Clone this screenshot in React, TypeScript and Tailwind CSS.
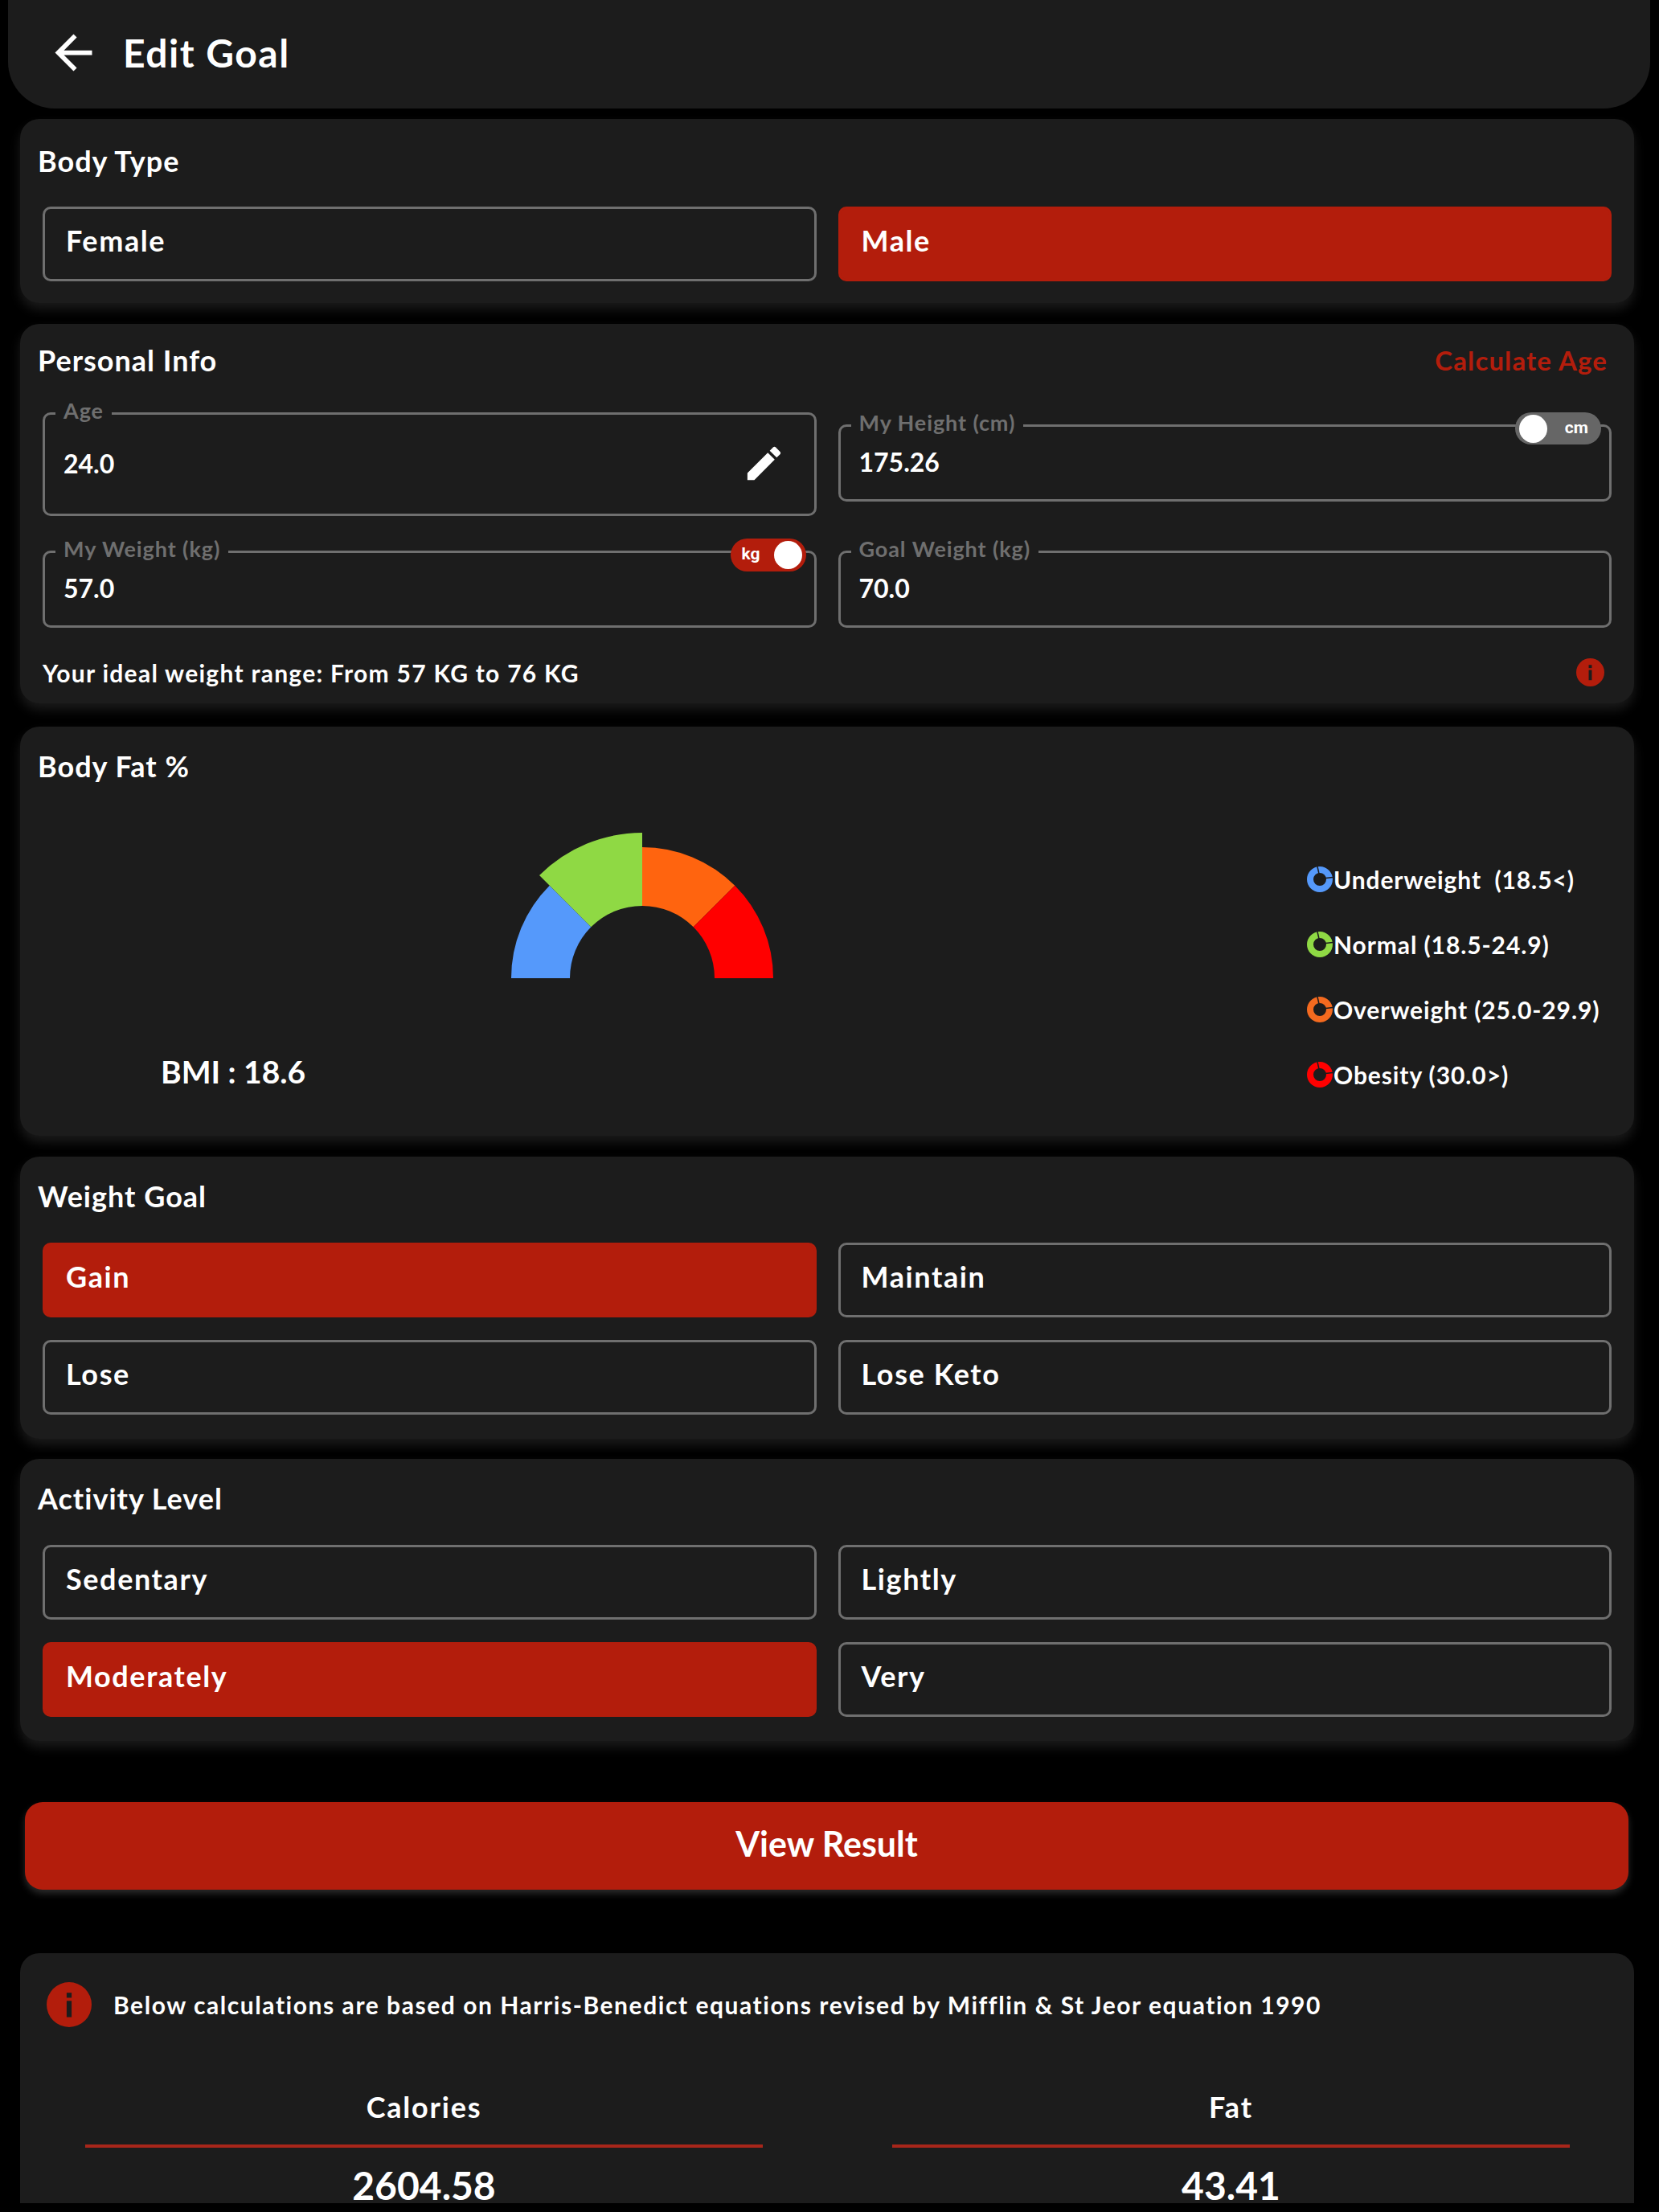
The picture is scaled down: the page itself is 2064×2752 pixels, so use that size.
const font = { fontFamily: 'Lato, "Open Sans", sans-serif' };

function Card({ className, children }: { className: string; children: React.ReactNode }) {
  return (
    <section
      className={`mr-[20px] ml-[15px] rounded-[24px] bg-[#1c1c1c] shadow-[0_8px_14px_rgba(48,48,48,0.55)] ${className}`}
    >
      {children}
    </section>
  );
}

function Heading({ children }: { children: React.ReactNode }) {
  return <h2 className="text-[36px] leading-[44px] font-bold tracking-[1px] text-white">{children}</h2>;
}

function Choice({ label, active = false }: { label: string; active?: boolean }) {
  return (
    <div
      className={`flex h-[93px] items-center rounded-[10px] border-[3px] pb-[9px] pl-[26px] text-[36px] font-bold tracking-[1.6px] text-white ${
        active ? 'border-[#b31d0c] bg-[#b31d0c]' : 'border-[#6f6f6f]'
      }`}
    >
      {label}
    </div>
  );
}

function Field({
  label,
  value,
  className,
  valueClassName,
  children,
}: {
  label: string;
  value: string;
  className: string;
  valueClassName: string;
  children?: React.ReactNode;
}) {
  return (
    <fieldset className={`relative rounded-[10px] border-[3px] border-[#6f6f6f] ${className}`}>
      <legend className="ml-[13px] px-[10px] text-[27px] leading-[28px] font-bold tracking-[0.9px] text-[#6f6f6f]">
        <span className="relative -top-[4px]">{label}</span>
      </legend>
      <div className={`pl-[23px] text-[32px] leading-[40px] font-bold text-white ${valueClassName}`}>
        {value}
      </div>
      {children}
    </fieldset>
  );
}

function InfoIcon({ className }: { className: string }) {
  return (
    <svg viewBox="0 0 36 36" className={className}>
      <circle cx="18" cy="18" r="18" fill="#b31d0c" />
      <rect x="16" y="8.5" width="4" height="4" fill="#1c1c1c" />
      <rect x="16" y="15" width="4" height="13" fill="#1c1c1c" />
    </svg>
  );
}

function Arc({ r, a0, a1, r0, fill }: { r: number; a0: number; a1: number; r0: number; fill: string }) {
  // angles in degrees, measured clockwise from the left end of the half circle
  const cx = 181;
  const cy = 181;
  const pt = (rad: number, a: number) => {
    const t = (a * Math.PI) / 180;
    return `${(cx - rad * Math.cos(t)).toFixed(2)} ${(cy - rad * Math.sin(t)).toFixed(2)}`;
  };
  return (
    <path
      d={`M${pt(r, a0)} A${r} ${r} 0 0 1 ${pt(r, a1)} L${pt(r0, a1)} A${r0} ${r0} 0 0 0 ${pt(r0, a0)} Z`}
      fill={fill}
    />
  );
}

function Gauge() {
  return (
    <svg viewBox="0 0 362 181" className="h-[181px] w-[362px]">
      <Arc r={163} r0={90} a0={0} a1={45} fill="#5599fb" />
      <Arc r={181} r0={90} a0={45} a1={90} fill="#8fd944" />
      <Arc r={163} r0={90} a0={90} a1={135} fill="#ff640f" />
      <Arc r={163} r0={90} a0={135} a1={180} fill="#ff0000" />
    </svg>
  );
}

function Donut({ color }: { color: string }) {
  return (
    <svg viewBox="0 0 32 32" className="h-[32px] w-[32px] shrink-0">
      <circle cx="16" cy="16" r="12" fill="none" stroke={color} strokeWidth="8" />
      <path d="M19 15 L32 13.5" stroke="#1c1c1c" strokeWidth="1.5" />
      <path d="M15 9 L13 0" stroke="#1c1c1c" strokeWidth="1.5" />
    </svg>
  );
}

function LegendRow({ color, label }: { color: string; label: string }) {
  return (
    <div className="flex h-[40px] items-center whitespace-pre text-[30px] font-bold tracking-[0.9px] text-white">
      <Donut color={color} />
      <span className="ml-px">{label}</span>
    </div>
  );
}

function Stat({ label, value }: { label: string; value: string }) {
  return (
    <div className="flex flex-col items-center">
      <div className="text-[36px] leading-[40px] font-bold tracking-[1.8px] text-white">{label}</div>
      <div className="mt-[27px] h-[4px] w-full bg-[#a8261a]" />
      <div className="mt-[26px] text-[48px] leading-[42px] font-bold text-white">{value}</div>
    </div>
  );
}

export default function App() {
  return (
    <div style={font} className="h-[2752px] w-[2064px] overflow-hidden bg-black pl-[10px]">
      <div className="flex h-[2742px] w-[2043px] flex-col overflow-x-clip">
        <header className="flex h-[135px] shrink-0 items-center rounded-b-[58px] bg-[#1c1c1c] pb-[4px] pl-[47px]">
          <svg viewBox="0 0 24 24" className="h-[69px] w-[69px]" fill="#fff">
            <path d="M20 11H7.83l5.59-5.59L12 4l-8 8 8 8 1.41-1.41L7.83 13H20v-2z" />
          </svg>
          <h1 className="ml-[27px] text-[48px] font-bold tracking-[1.5px] text-white">Edit Goal</h1>
        </header>

        <Card className="mt-[13px] h-[229px] shrink-0 px-[28px] pt-[30px]">
          <div className="-ml-[6px]">
            <Heading>Body Type</Heading>
          </div>
          <div className="mt-[35px] grid grid-cols-2 gap-x-[27px]">
            <Choice label="Female" />
            <Choice label="Male" active />
          </div>
        </Card>

        <Card className="mt-[26px] h-[472px] shrink-0 px-[28px] pt-[19px]">
          <div className="-ml-[6px] flex items-center justify-between pr-[5px]">
            <Heading>Personal Info</Heading>
            <span className="pt-[2px] text-[33px] font-bold tracking-[1.1px] text-[#b31d0c]">Calculate Age</span>
          </div>
          <div className="mt-[27px] grid grid-cols-2 items-start gap-x-[27px] gap-y-[31px]">
            <Field label="Age" value="24.0" className="h-[141px]" valueClassName="pt-[28px]">
              <svg viewBox="0 0 24 24" className="absolute top-[20px] right-[35px] h-[55px] w-[55px]" fill="#fff">
                <path d="M3 17.25V21h3.75L17.81 9.94l-3.75-3.75L3 17.25zM20.71 7.04c.39-.39.39-1.02 0-1.41l-2.34-2.34c-.39-.39-1.02-.39-1.41 0l-1.83 1.83 3.75 3.75 1.83-1.83z" />
              </svg>
            </Field>
            <Field label="My Height (cm)" value="175.26" className="mt-[15px] h-[108px]" valueClassName="pt-[11px]">
              <div className="absolute -top-[31px] right-[10px] flex h-[40px] w-[107px] items-center justify-end rounded-full bg-[#666666] pr-[16px] font-['Roboto'] text-[21px] font-bold text-white">
                <span className="absolute top-[3px] left-[5px] h-[35px] w-[35px] rounded-full bg-white" />
                cm
              </div>
            </Field>
            <Field label="My Weight (kg)" value="57.0" className="h-[108px]" valueClassName="pt-[11px]">
              <div className="absolute -top-[31px] right-[10px] flex h-[41px] w-[94px] items-center rounded-full bg-[#b31d0c] pl-[14px] font-['Roboto'] text-[21px] font-bold text-white">
                kg
                <span className="absolute top-[3px] right-[5px] h-[35px] w-[35px] rounded-full bg-white" />
              </div>
            </Field>
            <Field label="Goal Weight (kg)" value="70.0" className="h-[108px]" valueClassName="pt-[11px]" />
          </div>
          <div className="mt-[36px] flex items-center justify-between pr-[9px]">
            <span className="text-[30px] leading-[40px] font-bold tracking-[1.27px] text-white">
              Your ideal weight range: From 57 KG to 76 KG
            </span>
            <InfoIcon className="h-[35px] w-[35px]" />
          </div>
        </Card>

        <Card className="mt-[29px] h-[509px] shrink-0 pt-[27px] pl-[22px]">
          <Heading>Body Fat %</Heading>
          <div className="flex">
            <div className="w-[1579px] shrink-0">
              <div className="mt-[61px] ml-[571px]">
                <Gauge />
              </div>
              <div className="mt-[89px] ml-[153px] text-[39px] leading-[54px] font-bold text-white">BMI : 18.6</div>
            </div>
            <div className="mt-[99px] flex flex-col gap-y-[41px]">
              <LegendRow color="#5599fb" label="Underweight  (18.5<)" />
              <LegendRow color="#8fd944" label="Normal (18.5-24.9)" />
              <LegendRow color="#f46a1f" label="Overweight (25.0-29.9)" />
              <LegendRow color="#ff0000" label="Obesity (30.0>)" />
            </div>
          </div>
        </Card>

        <Card className="mt-[26px] h-[351px] shrink-0 px-[28px] pt-[27px]">
          <div className="-ml-[6px]">
            <Heading>Weight Goal</Heading>
          </div>
          <div className="mt-[36px] grid grid-cols-2 gap-x-[27px] gap-y-[28px]">
            <Choice label="Gain" active />
            <Choice label="Maintain" />
            <Choice label="Lose" />
            <Choice label="Lose Keto" />
          </div>
        </Card>

        <Card className="mt-[25px] h-[351px] shrink-0 px-[28px] pt-[27px]">
          <div className="-ml-[6px]">
            <Heading>Activity Level</Heading>
          </div>
          <div className="mt-[36px] grid grid-cols-2 gap-x-[27px] gap-y-[28px]">
            <Choice label="Sedentary" />
            <Choice label="Lightly" />
            <Choice label="Moderately" active />
            <Choice label="Very" />
          </div>
        </Card>

        <button className="mt-[76px] mr-[27px] ml-[21px] flex h-[109px] shrink-0 items-center justify-center rounded-[22px] bg-[#b31d0c] pb-[5px] text-[43px] font-bold text-white shadow-[0_5px_8px_rgba(70,70,70,0.6)]">
          View Result
        </button>

        <div className="mt-[79px] mr-[20px] ml-[15px] h-[311px] shrink-0 rounded-t-[24px] bg-[#1c1c1c] pt-[36px]">
          <div className="flex items-center pl-[33px]">
            <InfoIcon className="h-[56px] w-[56px]" />
            <p className="ml-[27px] text-[30px] font-bold tracking-[1.55px] text-white">
              Below calculations are based on Harris-Benedict equations revised by Mifflin &amp; St Jeor equation 1990
            </p>
          </div>
          <div className="mt-[79px] grid grid-cols-[843px_843px] gap-x-[161px] pl-[81px]">
            <Stat label="Calories" value="2604.58" />
            <Stat label="Fat" value="43.41" />
          </div>
        </div>
      </div>
    </div>
  );
}
